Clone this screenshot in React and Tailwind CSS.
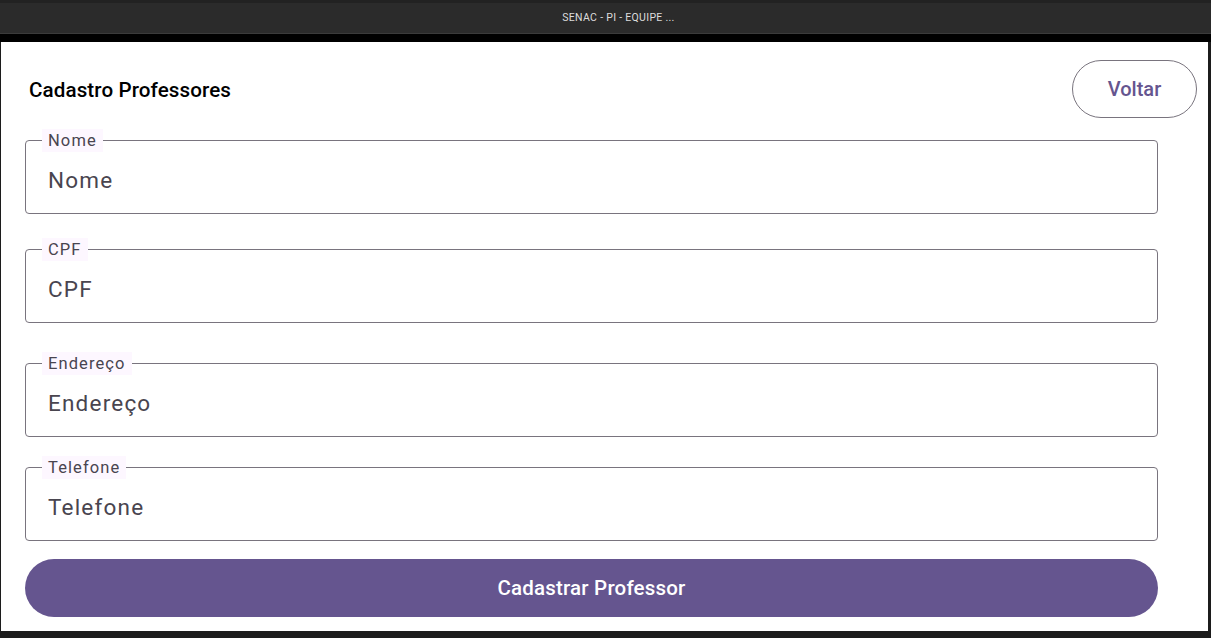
import React from 'react';

const fields = [
  { label: 'Nome', mt: 'mt-[22px]' },
  { label: 'CPF', mt: 'mt-[35px]' },
  { label: 'Endereço', mt: 'mt-[40px]' },
  { label: 'Telefone', mt: 'mt-[30px]' },
];

function OutlinedField({ label, mt }) {
  return (
    <div className={`relative ${mt} h-[74px] w-full rounded-[4px] border border-[#79747e] flex items-center pl-[22px] pt-[7px]`}>
      <span className="absolute left-[16px] top-[-12px] h-[23px] pl-[6px] pr-[6px] bg-[#fdf7ff] text-[16.5px] leading-[23px] tracking-[1.1px] text-[#49454f]">
        {label}
      </span>
      <input
        placeholder={label}
        className="w-full bg-transparent outline-none text-[22.5px] tracking-[1.2px] text-[#49454f] placeholder:text-[#49454f]"
      />
    </div>
  );
}

export default function App() {
  return (
    <div
      className="w-[1211px] h-[638px] bg-[#000] flex flex-col overflow-hidden"
      style={{ fontFamily: 'Roboto, "Noto Sans", sans-serif' }}
    >
      {/* window title bar */}
      <div className="h-[3px] bg-[#222222]" />
      <div className="h-[31px] bg-[#2b2b2b] flex items-center justify-center pl-[26px] border-b border-[#3b3b3b]">
        <span className="text-[10.5px] text-[#dcdcdc] tracking-[0.3px]">SENAC - PI - EQUIPE ...</span>
      </div>
      <div className="h-[8px] bg-black" />

      {/* page */}
      <div className="flex flex-1 bg-[#1c1c1c]">
        <div className="w-[1px]" />
        <div className="w-[1207px] h-[589px] bg-white flex flex-col">
          <div className="mt-[18px] h-[58px] flex items-center justify-between pl-[28px] pr-[11px]">
            <h1 className="text-[20.6px] font-medium text-black tracking-[0.1px] pt-[2px]">Cadastro Professores</h1>
            <button className="h-[58px] w-[125px] rounded-full border border-[#79747e] text-[20px] font-medium text-[#65558f]">
              Voltar
            </button>
          </div>

          <div className="ml-[24px] w-[1133px] flex flex-col">
            {fields.map((f) => (
              <OutlinedField key={f.label} label={f.label} mt={f.mt} />
            ))}
            <button className="mt-[18px] h-[58px] w-full rounded-full bg-[#65558f] text-white text-[20.5px] font-medium tracking-[0.2px]">
              Cadastrar Professor
            </button>
          </div>
        </div>
        <div className="flex-1 bg-[#1c1c1c]" />
      </div>
    </div>
  );
}
